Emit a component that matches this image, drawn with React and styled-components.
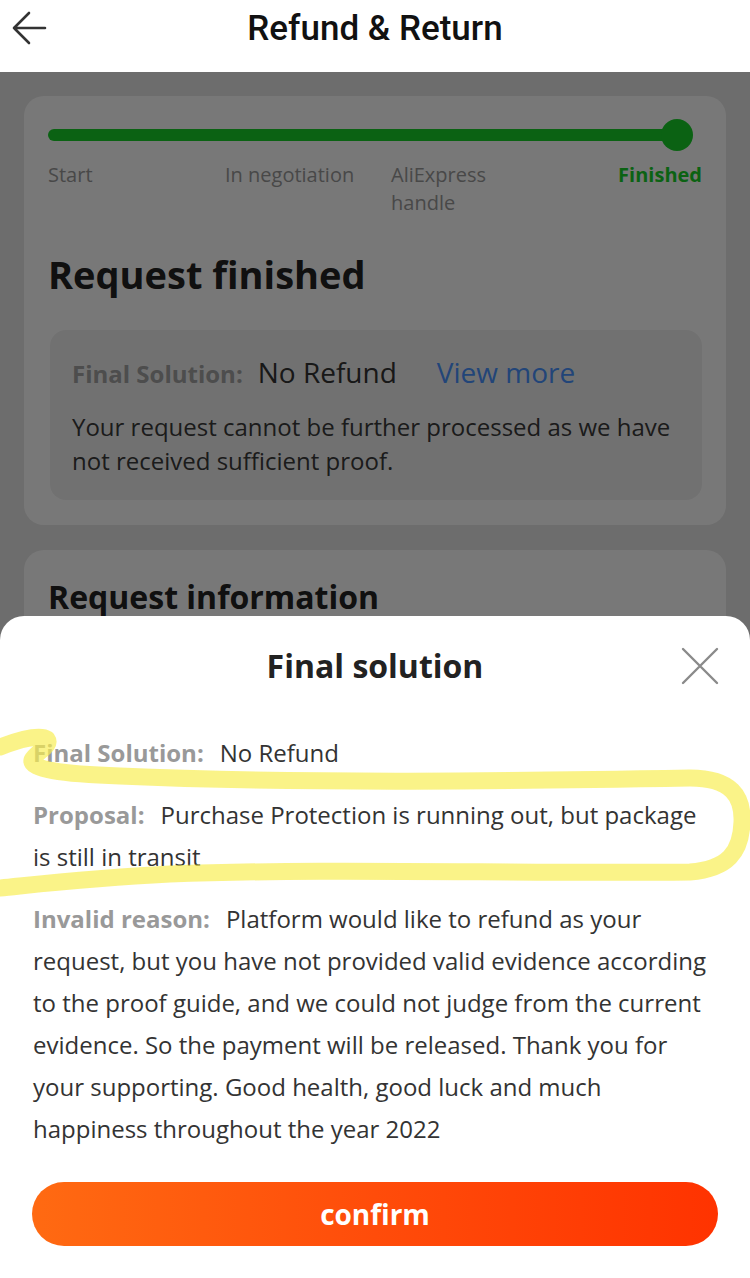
import React from 'react';
import styled, { createGlobalStyle } from 'styled-components';

const GlobalStyle = createGlobalStyle`
  html, body {
    margin: 0;
    padding: 0;
    background: #e8e8e8;
  }
  * {
    box-sizing: border-box;
  }
`;

const steps = [
  { label: 'Start' },
  { label: 'In negotiation' },
  { label: 'AliExpress handle', narrow: true },
  { label: 'Finished', active: true },
];

const details = [
  { label: 'Final Solution:', text: 'No Refund' },
  {
    label: 'Proposal:',
    text: 'Purchase Protection is running out, but package is still in transit',
  },
  {
    label: 'Invalid reason:',
    text:
      'Platform would like to refund as your request, but you have not provided valid evidence according to the proof guide, and we could not judge from the current evidence. So the payment will be released. Thank you for your supporting. Good health, good luck and much happiness throughout the year 2022',
  },
];

function BackArrow() {
  return (
    <svg width="40" height="40" viewBox="0 0 40 40">
      <path
        d="M36 20 H5 M20 5 L5 20 L20 35"
        fill="none"
        stroke="#333"
        strokeWidth="2.6"
        strokeLinecap="round"
        strokeLinejoin="round"
      />
    </svg>
  );
}

function CloseIcon() {
  return (
    <svg width="38" height="38" viewBox="0 0 38 38">
      <path
        d="M2 2 L36 36 M36 2 L2 36"
        fill="none"
        stroke="#8a8a8a"
        strokeWidth="2.4"
        strokeLinecap="round"
      />
    </svg>
  );
}

// hand-drawn marker loop over the first two rows of the sheet
function Highlight() {
  return (
    <Marker width="750" height="200" viewBox="0 720 750 200">
      <path
        d="M0 747 C 18 740, 40 734, 47 739 C 52 746, 36 752, 32 760 C 30 769, 60 774, 120 776 C 300 784, 520 781, 690 778 C 732 778, 743 797, 742 822 C 741 852, 728 869, 690 872 C 520 874, 330 868, 170 874 C 90 878, 40 884, 0 888"
        fill="none"
        stroke="rgba(248, 238, 80, 0.68)"
        strokeWidth="17"
        strokeLinecap="round"
        strokeLinejoin="round"
      />
    </Marker>
  );
}

function App() {
  return (
    <Screen>
      <GlobalStyle />
      <Header>
        <BackButton>
          <BackArrow />
        </BackButton>
        <Title>Refund &amp; Return</Title>
      </Header>

      <Body>
        <Card>
          <Track>
            <Dot />
          </Track>
          <Steps>
            {steps.map(step => (
              <Step key={step.label} active={step.active} narrow={step.narrow}>
                {step.label}
              </Step>
            ))}
          </Steps>
          <CardTitle>Request finished</CardTitle>
          <SolutionBox>
            <SolutionRow>
              <BoxLabel>Final Solution:</BoxLabel>
              <BoxValue>No Refund</BoxValue>
              <ViewMore>View more</ViewMore>
            </SolutionRow>
            <BoxText>
              Your request cannot be further processed as we have not received sufficient proof.
            </BoxText>
          </SolutionBox>
        </Card>
        <Card small>
          <CardTitle small>Request information</CardTitle>
        </Card>
      </Body>

      <Dim />

      <Sheet>
        <SheetHead>
          <SheetTitle>Final solution</SheetTitle>
          <Close>
            <CloseIcon />
          </Close>
        </SheetHead>
        <Details>
          {details.map(item => (
            <Detail key={item.label}>
              <DetailLabel>{item.label}</DetailLabel>
              {item.text}
            </Detail>
          ))}
        </Details>
        <Confirm>confirm</Confirm>
        <Highlight />
      </Sheet>
    </Screen>
  );
}

const Screen = styled.div`
  position: relative;
  width: 750px;
  height: 1278px;
  overflow: hidden;
  background: #e8e8e8;
  font-family: 'Open Sans', 'Noto Sans', sans-serif;
`;

const Header = styled.header`
  position: relative;
  z-index: 2;
  height: 72px;
  background: #fff;
  display: flex;
  align-items: center;
  justify-content: center;
`;

const BackButton = styled.div`
  position: absolute;
  left: 9px;
  top: 8px;
  width: 40px;
  height: 40px;
`;

const Title = styled.h1`
  margin: 0 0 16px;
  font-family: Roboto, 'Liberation Sans', sans-serif;
  font-weight: 500;
  font-size: 35px;
  color: #111;
`;

const Body = styled.main`
  padding: 24px 24px 0;
  display: flex;
  flex-direction: column;
  gap: 25px;
`;

const Card = styled.section`
  background: #fff;
  border-radius: 20px;
  padding: ${props => (props.small ? '25px 24px 40px' : '24px 24px 25px')};
`;

const Track = styled.div`
  position: relative;
  height: 12px;
  margin: 9px 25px 0 0;
  border-radius: 6px;
  background: #18d12a;
`;

const Dot = styled.span`
  position: absolute;
  right: -16px;
  top: -10px;
  width: 32px;
  height: 32px;
  border-radius: 50%;
  background: #18d12a;
`;

const Steps = styled.div`
  display: grid;
  grid-template-columns: 177px 166px 1fr auto;
  margin-top: 20px;
`;

const Step = styled.span`
  font-size: 20px;
  line-height: 28px;
  color: ${props => (props.active ? '#18d12a' : '#9a9a9a')};
  font-weight: ${props => (props.active ? 700 : 400)};
  max-width: ${props => (props.narrow ? '110px' : 'none')};
`;

const CardTitle = styled.h2`
  margin: ${props => (props.small ? '0' : '35px 0 0')};
  font-size: ${props => (props.small ? '32px' : '38px')};
  line-height: 44px;
  font-weight: 700;
  color: #222;
`;

const SolutionBox = styled.div`
  margin: 34px 0 0 2px;
  background: #f1f1f1;
  border-radius: 16px;
  padding: 24px 22px 22px;
`;

const SolutionRow = styled.div`
  display: flex;
  align-items: baseline;
  line-height: 36px;
`;

const BoxLabel = styled.span`
  font-size: 24px;
  font-weight: 700;
  color: #a3a3a3;
  margin-right: 15px;
`;

const BoxValue = styled.span`
  font-size: 28px;
  color: #333;
  margin-right: 40px;
`;

const ViewMore = styled.span`
  font-size: 28px;
  color: #4a93ff;
`;

const BoxText = styled.p`
  margin: 18px 0 0;
  font-size: 24px;
  line-height: 34px;
  color: #3a3a3a;
`;

const Dim = styled.div`
  position: absolute;
  left: 0;
  right: 0;
  top: 72px;
  bottom: 0;
  background: rgba(0, 0, 0, 0.53);
`;

const Sheet = styled.div`
  position: absolute;
  left: 0;
  right: 0;
  top: 616px;
  bottom: 0;
  background: #fff;
  border-radius: 24px 24px 0 0;
  display: flex;
  flex-direction: column;
`;

const SheetHead = styled.div`
  position: relative;
  height: 98px;
  display: flex;
  justify-content: center;
  align-items: center;
`;

const SheetTitle = styled.h3`
  margin: 0;
  font-size: 32px;
  font-weight: 700;
  color: #222;
`;

const Close = styled.div`
  position: absolute;
  right: 31px;
  top: 31px;
  width: 38px;
  height: 38px;
`;

const Details = styled.div`
  padding: 18px 33px 0;
  display: flex;
  flex-direction: column;
  gap: 20px;
`;

const Detail = styled.p`
  margin: 0;
  font-size: 24px;
  line-height: 42px;
  color: #333;
`;

const DetailLabel = styled.span`
  font-weight: 700;
  color: #999;
  margin-right: 16px;
`;

const Confirm = styled.button`
  margin: 32px 32px 0;
  height: 64px;
  border: none;
  border-radius: 32px;
  background: linear-gradient(90deg, #ff6a12 0%, #ff4c0a 50%, #ff3300 100%);
  color: #fff;
  font-family: 'Open Sans', sans-serif;
  font-size: 28px;
  font-weight: 700;
`;

const Marker = styled.svg`
  position: absolute;
  left: 0;
  top: 104px;
  pointer-events: none;
`;

export default App;
